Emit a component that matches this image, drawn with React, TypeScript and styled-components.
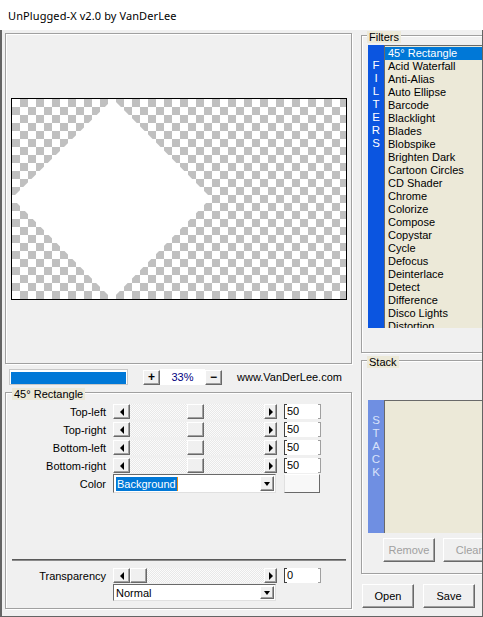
import styled, { createGlobalStyle, css } from "styled-components";

const GlobalStyle = createGlobalStyle`
  html, body {
    margin: 0;
    padding: 0;
    background: #f0f0f0;
  }
  body {
    font-family: "Liberation Sans", Arial, sans-serif;
    font-size: 11px;
    color: #000;
  }
  * {
    box-sizing: border-box;
  }
`;

const raised = css`
  background: #f0f0f0;
  border: 1px solid;
  border-color: #fff #696969 #696969 #fff;
  box-shadow: inset -1px -1px 0 #a0a0a0;
`;

const Window = styled.div`
  width: 483px;
  height: 617px;
  display: flex;
  flex-direction: column;
  overflow: hidden;
`;

const TitleBar = styled.div`
  height: 30px;
  flex: none;
  background: #fff;
  padding-left: 8px;
  display: flex;
  align-items: center;
  font-family: "Noto Sans", "Open Sans", sans-serif;
  font-size: 11px;
  letter-spacing: 0.1px;
  color: #000;
`;

const Body = styled.div`
  flex: 1;
  display: flex;
  gap: 9px;
  background: #f0f0f0;
  border-left: 2px solid #646464;
  border-right: 1px solid #646464;
  border-bottom: 1px solid #646464;
  padding: 3px 0 0 3px;
  overflow: hidden;
`;

const LeftCol = styled.div`
  width: 347px;
  flex: none;
  display: flex;
  flex-direction: column;
`;

const RightCol = styled.div`
  width: 140px;
  flex: none;
  display: flex;
  flex-direction: column;
`;

const Group = styled.div<{ $h: number }>`
  position: relative;
  height: ${(p) => p.$h}px;
  flex: none;
  border: 1px solid #a0a0a0;
  box-shadow: inset 1px 1px 0 #fff, 1px 1px 0 #fff;
`;

const Legend = styled.span<{ $left: number }>`
  position: absolute;
  top: -5px;
  left: ${(p) => p.$left}px;
  background: #ece9d8;
  padding: 0 2px;
  line-height: 12px;
`;

const PreviewGroup = styled(Group)`
  padding: 64px 5px 0;
`;

const Canvas = styled.div`
  width: 336px;
  height: 202px;
  border: 1px solid #000;
  background: repeating-conic-gradient(#c0c0c0 0 25%, #fff 0 50%) 0 0 / 16px 16px;
  overflow: hidden;

  svg {
    display: block;
  }
`;

const ZoomRow = styled.div`
  height: 16px;
  margin: 5px 0 7px;
  padding-left: 4px;
  display: flex;
  align-items: center;
`;

const Progress = styled.div`
  width: 119px;
  height: 16px;
  border: 1px solid #c8c8c8;
  background: #fff;
  padding: 2px 1px 0 1px;
`;

const ProgressFill = styled.div`
  height: 100%;
  background: #0078d7;
`;

const ZoomBtn = styled.div<{ $ml?: number }>`
  ${raised}
  width: 17px;
  height: 15px;
  margin-left: ${(p) => p.$ml ?? 0}px;
  display: flex;
  align-items: center;
  justify-content: center;
  font-weight: bold;
  font-size: 12px;
  line-height: 1;
`;

const Percent = styled.div`
  width: 45px;
  height: 16px;
  background: #fff;
  color: #000080;
  display: flex;
  align-items: center;
  justify-content: center;
`;

const Site = styled.span`
  margin-left: 15px;
`;

const ParamsGroup = styled(Group)`
  padding: 11px 0 0 0;
  display: flex;
  flex-direction: column;
`;

const Row = styled.div<{ $gap?: number }>`
  display: grid;
  grid-template-columns: 100px 164px 37px;
  column-gap: 7px;
  align-items: center;
  margin-top: ${(p) => p.$gap ?? 0}px;
`;

const Label = styled.span`
  text-align: right;
  line-height: 14px;
`;

const Scroll = styled.div`
  height: 15px;
  display: flex;
`;

const ArrowBtn = styled.div<{ $w: number }>`
  ${raised}
  width: ${(p) => p.$w}px;
  flex: none;
  display: flex;
  align-items: center;
  justify-content: center;
`;

const Tri = styled.span<{ $dir: "left" | "right" | "down" }>`
  width: 0;
  height: 0;
  ${(p) =>
    p.$dir === "left"
      ? css`
          border-top: 4px solid transparent;
          border-bottom: 4px solid transparent;
          border-right: 4px solid #000;
        `
      : p.$dir === "right"
        ? css`
            border-top: 4px solid transparent;
            border-bottom: 4px solid transparent;
            border-left: 4px solid #000;
          `
        : css`
            border-left: 3px solid transparent;
            border-right: 3px solid transparent;
            border-top: 4px solid #000;
          `}
`;

const Track = styled.div`
  position: relative;
  flex: 1;
  background: repeating-conic-gradient(#e8e8e8 0 25%, #fbfbfb 0 50%) 0 0 / 2px 2px;
`;

const Thumb = styled.div<{ $pos: number }>`
  ${raised}
  position: absolute;
  top: 0;
  left: ${(p) => p.$pos}px;
  width: 17px;
  height: 15px;
`;

const Edit = styled.div`
  position: relative;
  height: 15px;
  background: #fff;
  padding-left: 3px;
  line-height: 15px;

  &::before,
  &::after {
    content: "";
    position: absolute;
    top: 0;
    bottom: 0;
    width: 2px;
    border: 1px solid #404040;
  }
  &::before {
    left: 0;
    border-right: none;
  }
  &::after {
    right: 0;
    border-left: none;
    border-color: #a0a0a0;
  }
`;

const Combo = styled.div<{ $h: number }>`
  width: 163px;
  height: ${(p) => p.$h}px;
  background: #fff;
  border: 1px solid;
  border-color: #696969 #e0e0e0 #e0e0e0 #696969;
  display: flex;
  align-items: center;
  padding: 1px 1px 1px 2px;
`;

const ComboText = styled.span<{ $selected?: boolean }>`
  flex: 1;
  line-height: 14px;
  ${(p) =>
    p.$selected &&
    css`
      flex: none;
      background: #0078d7;
      color: #fff;
      padding: 0 1px;
      border-right: 1px solid #e08a20;
    `}
`;

const ComboSpacer = styled.span`
  flex: 1;
`;

const DropBtn = styled.div`
  ${raised}
  width: 14px;
  height: 100%;
  flex: none;
  display: flex;
  align-items: center;
  justify-content: center;
`;

const Swatch = styled.div`
  width: 36px;
  height: 19px;
  background: #f8f8f8;
  border: 1px solid;
  border-color: #fff #696969 #696969 #e0e0e0;
`;

const Separator = styled.div`
  height: 2px;
  margin: 66px 5px 0 6px;
  border-top: 1px solid #5a5a5a;
  border-bottom: 1px solid #8a8a8a;
`;

const Indent = styled.div`
  padding-left: 107px;
  margin-top: 1px;
`;

const FiltersGroup = styled(Group)`
  margin-top: 2px;
  padding: 9px 0 0 6px;
`;

const StackGroup = styled(Group)`
  margin-top: 7px;
  padding: 39px 0 0 6px;
`;

const Pane = styled.div<{ $h: number }>`
  height: ${(p) => p.$h}px;
  display: flex;
`;

const SideBar = styled.div<{ $bg: string; $fg: string }>`
  width: 16px;
  flex: none;
  background: ${(p) => p.$bg};
  color: ${(p) => p.$fg};
  display: flex;
  flex-direction: column;
  align-items: center;
  padding-top: 14px;
  font-size: 11.5px;
  line-height: 13px;
`;

const List = styled.div`
  flex: 1;
  background: #ece9d8;
  border-top: 1px solid #696969;
  border-left: 1px solid #696969;
  padding-top: 1px;
  overflow: hidden;
`;

const Item = styled.div<{ $selected?: boolean }>`
  height: 13px;
  line-height: 13px;
  padding-left: 3px;
  white-space: nowrap;
  ${(p) =>
    p.$selected &&
    css`
      background: #0078d7;
      color: #fff;
    `}
`;

const StackButtons = styled.div`
  display: flex;
  gap: 8px;
  margin: 5px 0 0 15px;
`;

const WinButton = styled.div<{ $disabled?: boolean }>`
  ${raised}
  width: 52px;
  height: 24px;
  flex: none;
  display: flex;
  align-items: center;
  justify-content: center;
  color: ${(p) => (p.$disabled ? "#a0a0a0" : "#000")};
`;

const BottomButtons = styled.div`
  display: flex;
  gap: 9px;
  margin: 10px 0 0 1px;
`;

const filters = [
  "45° Rectangle",
  "Acid Waterfall",
  "Anti-Alias",
  "Auto Ellipse",
  "Barcode",
  "Blacklight",
  "Blades",
  "Blobspike",
  "Brighten Dark",
  "Cartoon Circles",
  "CD Shader",
  "Chrome",
  "Colorize",
  "Compose",
  "Copystar",
  "Cycle",
  "Defocus",
  "Deinterlace",
  "Detect",
  "Difference",
  "Disco Lights",
  "Distortion",
];

const corners = ["Top-left", "Top-right", "Bottom-left", "Bottom-right"];

function ScrollBar({ pos }: { pos: number }) {
  return (
    <Scroll>
      <ArrowBtn $w={17}>
        <Tri $dir="left" />
      </ArrowBtn>
      <Track>
        <Thumb $pos={pos} />
      </Track>
      <ArrowBtn $w={13}>
        <Tri $dir="right" />
      </ArrowBtn>
    </Scroll>
  );
}

function Letters({ text }: { text: string }) {
  return (
    <>
      {text.split("").map((c, i) => (
        <span key={i}>{c}</span>
      ))}
    </>
  );
}

export default function App() {
  return (
    <>
      <GlobalStyle />
      <Window>
        <TitleBar>UnPlugged-X v2.0 by VanDerLee</TitleBar>
        <Body>
          <LeftCol>
            <PreviewGroup $h={331}>
              <Canvas>
                <svg width="334" height="200" viewBox="0 0 334 200">
                  <polygon points="101,0 199,99 100,200 0,99" fill="#fff" />
                </svg>
              </Canvas>
            </PreviewGroup>

            <ZoomRow>
              <Progress>
                <ProgressFill />
              </Progress>
              <ZoomBtn $ml={15}>+</ZoomBtn>
              <Percent>33%</Percent>
              <ZoomBtn>−</ZoomBtn>
              <Site>www.VanDerLee.com</Site>
            </ZoomRow>

            <ParamsGroup $h={217}>
              <Legend $left={6}>45° Rectangle</Legend>
              {corners.map((c, i) => (
                <Row key={c} $gap={i === 0 ? 0 : 3}>
                  <Label>{c}</Label>
                  <ScrollBar pos={57} />
                  <Edit>50</Edit>
                </Row>
              ))}
              <Row $gap={1}>
                <Label>Color</Label>
                <Combo $h={19}>
                  <ComboText $selected>Background</ComboText>
                  <ComboSpacer />
                  <DropBtn>
                    <Tri $dir="down" />
                  </DropBtn>
                </Combo>
                <Swatch />
              </Row>

              <Separator />

              <Row $gap={7}>
                <Label>Transparency</Label>
                <ScrollBar pos={0} />
                <Edit>0</Edit>
              </Row>
              <Indent>
                <Combo $h={17}>
                  <ComboText>Normal</ComboText>
                  <DropBtn>
                    <Tri $dir="down" />
                  </DropBtn>
                </Combo>
              </Indent>
            </ParamsGroup>
          </LeftCol>

          <RightCol>
            <FiltersGroup $h={318}>
              <Legend $left={5}>Filters</Legend>
              <Pane $h={283}>
                <SideBar $bg="#0b55e0" $fg="#fff">
                  <Letters text="FILTERS" />
                </SideBar>
                <List>
                  {filters.map((f, i) => (
                    <Item key={f} $selected={i === 0}>
                      {f}
                    </Item>
                  ))}
                </List>
              </Pane>
            </FiltersGroup>

            <StackGroup $h={214}>
              <Legend $left={5}>Stack</Legend>
              <Pane $h={133}>
                <SideBar $bg="#6f8fe2" $fg="#d8e2fa">
                  <Letters text="STACK" />
                </SideBar>
                <List />
              </Pane>
              <StackButtons>
                <WinButton $disabled>Remove</WinButton>
                <WinButton $disabled>Clear</WinButton>
              </StackButtons>
            </StackGroup>

            <BottomButtons>
              <WinButton>Open</WinButton>
              <WinButton>Save</WinButton>
            </BottomButtons>
          </RightCol>
        </Body>
      </Window>
    </>
  );
}
